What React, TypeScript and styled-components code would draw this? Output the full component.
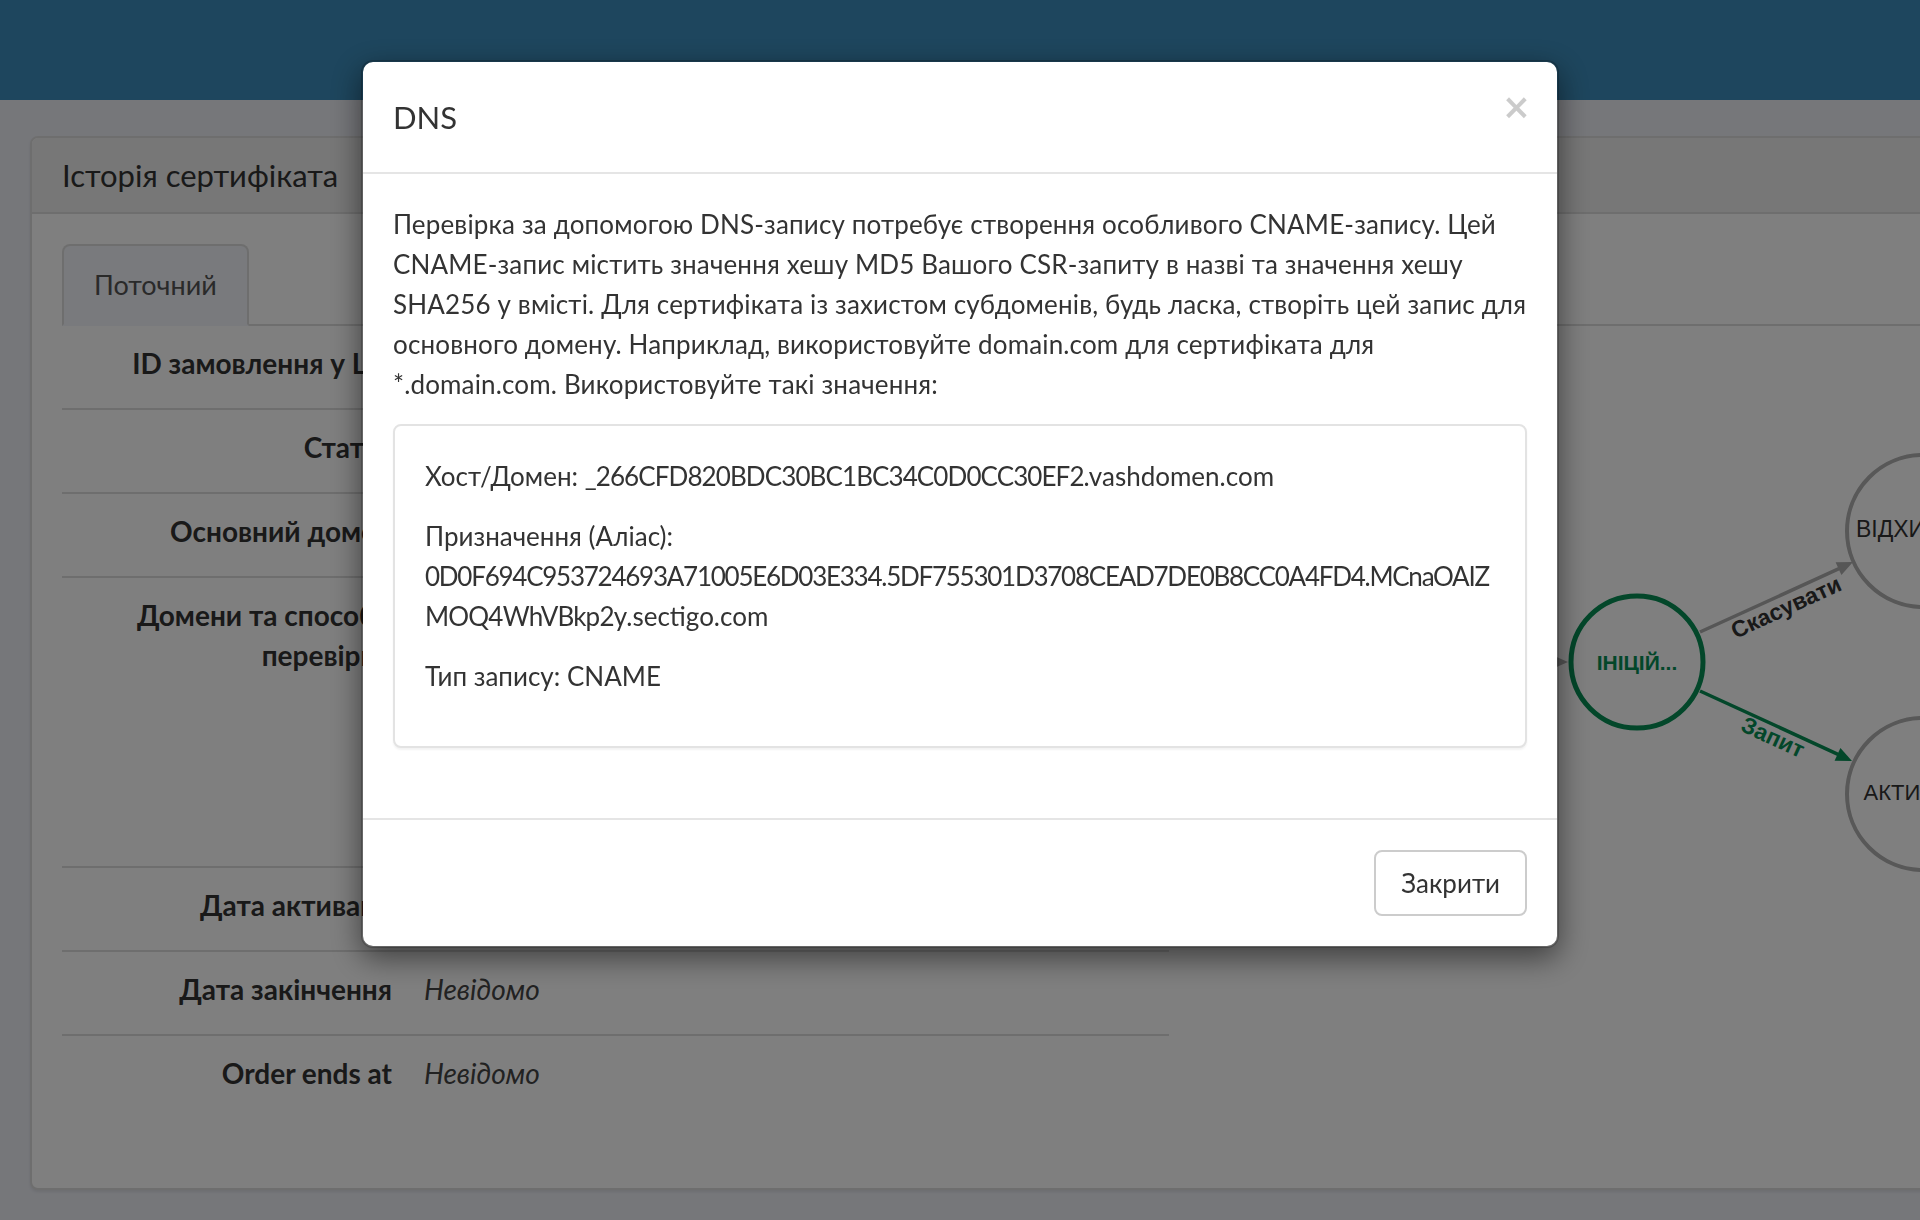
import React from "react";
import styled, { createGlobalStyle } from "styled-components";

const FONT = `"Lato", "Noto Sans", sans-serif`;
const GRAPH_FONT = `"Liberation Sans", Arial, sans-serif`;

const Global = createGlobalStyle`
  html, body { margin: 0; padding: 0; }
  body {
    width: 1920px;
    height: 1220px;
    overflow: hidden;
    background: #eceef5;
    font-family: ${FONT};
    color: #333;
  }
  * { box-sizing: border-box; }
`;

const Page = styled.div`
  min-height: 1220px;
  background: #eceef5;
`;

const TopBar = styled.header`
  height: 100px;
  background: #3c8dbc;
`;

const Content = styled.main`
  padding: 36px 0 0 30px;
`;

const Panel = styled.section`
  width: 1960px;
  background: #fff;
  border: 2px solid #ddd;
  border-radius: 8px;
  box-shadow: 0 2px 3px rgba(0, 0, 0, 0.08);
`;

const PanelHeading = styled.div`
  background: #eeeeee;
  border-bottom: 2px solid #ddd;
  padding: 20px 30px 19px;
  border-radius: 6px 6px 0 0;
`;

const PanelTitle = styled.h3`
  margin: 0;
  font-size: 31px;
  line-height: 35px;
  font-weight: 400;
  color: #333;
`;

const PanelBody = styled.div`
  padding: 30px 30px 30px;
`;

const Tabs = styled.ul`
  list-style: none;
  margin: 0;
  padding: 0;
  display: flex;
  border-bottom: 2px solid #ddd;
`;

const Tab = styled.li`
  margin-bottom: -2px;
  border: 2px solid #ddd;
  border-bottom-color: transparent;
  border-radius: 8px 8px 0 0;
  background: #f2f4fa;
  padding: 19px 30px;
  font-size: 27px;
  line-height: 40px;
  color: #555;
`;

const TabPane = styled.div`
  display: flex;
  align-items: flex-start;
`;

const InfoTable = styled.table`
  flex: none;
  width: 1107px;
  border-collapse: collapse;
  margin-bottom: 40px;
  font-size: 28px;
  line-height: 40px;
  tr:not(:first-child) > th,
  tr:not(:first-child) > td {
    border-top: 2px solid #ddd;
  }
`;

const Label = styled.th`
  width: 346px;
  padding: 17px 16px 25px;
  text-align: right;
  vertical-align: top;
  font-weight: 700;
  color: #333;
`;

const Value = styled.td`
  padding: 17px 16px 25px;
  vertical-align: top;
  color: #333;
`;

const Unknown = styled.em`
  font-style: italic;
  color: #444;
`;

const DomainBlock = styled.div`
  min-height: 246px;
`;

const Graph = styled.svg`
  flex: none;
  margin-left: 30px;
  overflow: visible;
`;

const Backdrop = styled.div`
  position: fixed;
  inset: 0;
  background: rgba(0, 0, 0, 0.5);
`;

const ModalLayer = styled.div`
  position: fixed;
  inset: 0;
  overflow: hidden;
`;

const Dialog = styled.div`
  width: 1198px;
  margin: 60px auto 0;
`;

const ModalContent = styled.div`
  background: #fff;
  background-clip: padding-box;
  border: 2px solid rgba(0, 0, 0, 0.2);
  border-radius: 12px;
  box-shadow: 0 10px 30px rgba(0, 0, 0, 0.5);
`;

const ModalHeader = styled.div`
  display: flex;
  justify-content: space-between;
  align-items: flex-start;
  padding: 30px;
  border-bottom: 2px solid #e5e5e5;
`;

const ModalTitle = styled.h4`
  margin: 0;
  font-size: 31px;
  line-height: 50px;
  font-weight: 400;
  color: #333;
`;

const CloseButton = styled.button`
  border: 0;
  background: transparent;
  padding: 0;
  margin: -2px -4px 0 0;
  font-family: "DejaVu Sans", sans-serif;
  font-size: 35px;
  font-weight: 700;
  line-height: 1;
  color: #000;
  opacity: 0.2;
  cursor: pointer;
`;

const ModalBody = styled.div`
  padding: 30px;
  font-size: 26px;
  line-height: 40px;
  color: #333;
`;

const Para = styled.p<{ $spacing?: number }>`
  margin: 0 0 20px;
  white-space: nowrap;
  letter-spacing: ${(p) => p.$spacing ?? 0}px;
`;

const Hash = styled.span<{ $tight: number }>`
  letter-spacing: ${(p) => p.$tight}px;
`;

const Well = styled.div`
  margin-bottom: 40px;
  padding: 30px;
  background: #fff;
  border: 2px solid #e3e3e3;
  border-radius: 8px;
  box-shadow: 0 2px 2px rgba(0, 0, 0, 0.05);
`;

const ModalFooter = styled.div`
  display: flex;
  justify-content: flex-end;
  padding: 30px;
  border-top: 2px solid #e5e5e5;
`;

const Button = styled.button`
  font-family: ${FONT};
  font-size: 26px;
  line-height: 40px;
  color: #333;
  background: #fff;
  border: 2px solid #ccc;
  border-radius: 8px;
  padding: 11px 25px;
  cursor: pointer;
`;

const GREEN = "#068e54";
const GRAY = "#acacac";

function StateGraph() {
  return (
    <Graph width={760} height={700} viewBox="0 0 760 700">
      {/* incoming edge */}
      <line x1={200} y1={336} x2={355} y2={336} stroke={GRAY} strokeWidth={3.5} />
      <polygon points="369,336 353,329 353,343" fill={GRAY} />
      {/* cancel edge */}
      <line x1={501} y1={306} x2={640} y2={242.7} stroke={GRAY} strokeWidth={3.5} />
      <polygon points="654,236 642.4,249.1 636.6,236.3" fill={GRAY} />
      {/* request edge */}
      <line x1={501} y1={365} x2={639} y2={428.3} stroke={GREEN} strokeWidth={3.5} />
      <polygon points="653,435 635.6,434.7 641.4,421.9" fill={GREEN} />

      <text
        x={587}
        y={281}
        transform="rotate(-24.6 587 281)"
        textAnchor="middle"
        dominantBaseline="central"
        fontFamily={GRAPH_FONT}
        fontWeight={700}
        fontSize={23}
        fill="#333"
      >
        Скасувати
      </text>
      <text
        x={574}
        y={411}
        transform="rotate(24.7 574 411)"
        textAnchor="middle"
        dominantBaseline="central"
        fontFamily={GRAPH_FONT}
        fontWeight={700}
        fontSize={23}
        fill={GREEN}
      >
        Запит
      </text>

      <circle cx={438} cy={336} r={66} fill="#fff" stroke={GREEN} strokeWidth={5} />
      <text
        x={438}
        y={336}
        textAnchor="middle"
        dominantBaseline="central"
        fontFamily={GRAPH_FONT}
        fontWeight={700}
        fontSize={21}
        fill={GREEN}
      >
        ІНІЦІЙ...
      </text>

      <circle cx={724} cy={205} r={76} fill="#fff" stroke="#b0b0b0" strokeWidth={4} />
      <text
        x={724}
        y={203}
        textAnchor="middle"
        dominantBaseline="central"
        fontFamily={GRAPH_FONT}
        fontSize={23}
        fill="#333"
      >
        ВІДХИЛЕНО
      </text>

      <circle cx={724} cy={468} r={76} fill="#fff" stroke="#b0b0b0" strokeWidth={4} />
      <text
        x={724}
        y={466}
        textAnchor="middle"
        dominantBaseline="central"
        fontFamily={GRAPH_FONT}
        fontSize={22}
        fill="#333"
      >
        АКТИВНИЙ
      </text>
    </Graph>
  );
}

export default function App() {
  return (
    <Page>
      <Global />
      <TopBar />
      <Content>
        <Panel>
          <PanelHeading>
            <PanelTitle>Історія сертифіката</PanelTitle>
          </PanelHeading>
          <PanelBody>
            <Tabs>
              <Tab>Поточний</Tab>
            </Tabs>
            <TabPane>
              <InfoTable>
                <tbody>
                  <tr>
                    <Label>ID замовлення у ЦС</Label>
                    <Value />
                  </tr>
                  <tr>
                    <Label>Статус</Label>
                    <Value />
                  </tr>
                  <tr>
                    <Label>Основний домен</Label>
                    <Value />
                  </tr>
                  <tr>
                    <Label>Домени та способи перевірки</Label>
                    <Value>
                      <DomainBlock />
                    </Value>
                  </tr>
                  <tr>
                    <Label>Дата активації</Label>
                    <Value />
                  </tr>
                  <tr>
                    <Label>Дата закінчення</Label>
                    <Value>
                      <Unknown>Невідомо</Unknown>
                    </Value>
                  </tr>
                  <tr>
                    <Label>Order ends at</Label>
                    <Value>
                      <Unknown>Невідомо</Unknown>
                    </Value>
                  </tr>
                </tbody>
              </InfoTable>
              <StateGraph />
            </TabPane>
          </PanelBody>
        </Panel>
      </Content>

      <Backdrop />
      <ModalLayer>
        <Dialog>
          <ModalContent>
            <ModalHeader>
              <ModalTitle>DNS</ModalTitle>
              <CloseButton aria-label="Close">×</CloseButton>
            </ModalHeader>
            <ModalBody>
              <Para $spacing={0.15}>
                Перевірка за допомогою DNS-запису потребує створення особливого CNAME-запису. Цей
                <br />
                CNAME-запис містить значення хешу MD5 Вашого CSR-запиту в назві та значення хешу
                <br />
                SHA256 у вмісті. Для сертифіката із захистом субдоменів, будь ласка, створіть цей запис для
                <br />
                основного домену. Наприклад, використовуйте domain.com для сертифіката для
                <br />
                *.domain.com. Використовуйте такі значення:
              </Para>
              <Well>
                <Para>
                  Хост/Домен: <Hash $tight={-0.9}>_266CFD820BDC30BC1BC34C0D0CC30EF2</Hash>.vashdomen.com
                </Para>
                <Para>
                  Призначення (Аліас):
                  <br />
                  <Hash $tight={-1.25}>
                    0D0F694C953724693A71005E6D03E334.5DF755301D3708CEAD7DE0B8CC0A4FD4.MCnaOAIZ
                  </Hash>
                  <br />
                  <Hash $tight={-0.8}>MOQ4WhVBkp2y</Hash>.sectigo.com
                </Para>
                <Para>Тип запису: CNAME</Para>
              </Well>
            </ModalBody>
            <ModalFooter>
              <Button>Закрити</Button>
            </ModalFooter>
          </ModalContent>
        </Dialog>
      </ModalLayer>
    </Page>
  );
}
